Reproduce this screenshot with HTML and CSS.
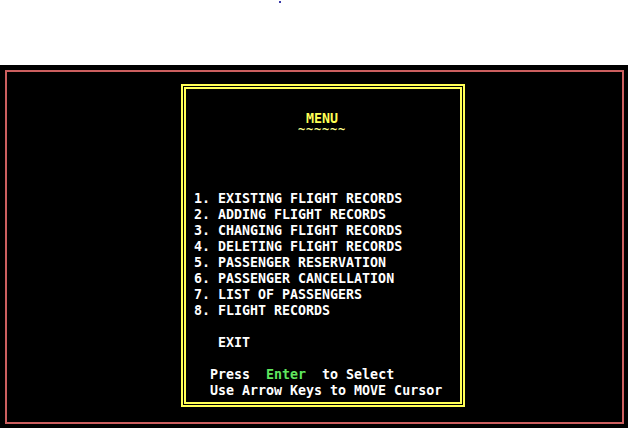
FILE: index.html
```html
<!DOCTYPE html>
<html lang="en">
<head>
<meta charset="utf-8">
<title>Menu</title>
<link rel="stylesheet" href="styles.css">
</head>
<body>
<div class="top"><span class="dot"></span></div>
<div class="screen">
  <div class="frame">
    <div class="box">
      <div class="inner">
        <div class="title">MENU</div>
        <div class="tildes">~~~~~~</div>
        <ol class="items">
          <li>1. EXISTING FLIGHT RECORDS</li>
          <li>2. ADDING FLIGHT RECORDS</li>
          <li>3. CHANGING FLIGHT RECORDS</li>
          <li>4. DELETING FLIGHT RECORDS</li>
          <li>5. PASSENGER RESERVATION</li>
          <li>6. PASSENGER CANCELLATION</li>
          <li>7. LIST OF PASSENGERS</li>
          <li>8. FLIGHT RECORDS</li>
        </ol>
        <div class="exit">EXIT</div>
        <div class="help first">Press  <span class="key">Enter</span>  to Select</div>
        <div class="help">Use Arrow Keys to MOVE Cursor</div>
      </div>
    </div>
  </div>
</div>
</body>
</html>
```

FILE: styles.css
```css
* { box-sizing: border-box; }
html, body { margin: 0; padding: 0; background: #ffffff; }
body { width: 628px; height: 428px; overflow: hidden; }

.top { height: 65px; padding: 1px 0 0 279px; }
.dot { display: block; width: 2px; height: 2px; background: #3a3aa8; }

.screen {
  height: 363px;
  background: #000000;
  padding: 5px 4px 4px 5px;
}
.frame {
  height: 100%;
  border: 2px solid #cc5f5f;
  padding: 12px 0 0 174px;
}
.box {
  width: 284px;
  height: 323px;
  border: 2px solid #ffff55;
  padding: 1px;
}
.inner {
  height: 100%;
  border: 2px solid #ffff55;
  padding: 22px 0 0 8px;
  font-family: "DejaVu Sans Mono", "Liberation Mono", monospace;
  font-weight: bold;
  font-size: 13.3px;
  line-height: 16px;
  color: #ffffff;
}
.title, .items li, .exit, .help { white-space: pre; height: 16px; }
.title { padding-left: 112px; color: #ffff55; }
.tildes {
  white-space: pre;
  padding-left: 104px;
  color: #ffff90;
  height: 4px;
  line-height: 4px;
  font-size: 12px;
  letter-spacing: 0.8px;
}
.items { list-style: none; margin: 60px 0 0 0; padding: 0; }
.exit { margin-top: 16px; padding-left: 24px; }
.help { padding-left: 16px; }
.help.first { margin-top: 16px; }
.key { color: #5fe65f; }
```
